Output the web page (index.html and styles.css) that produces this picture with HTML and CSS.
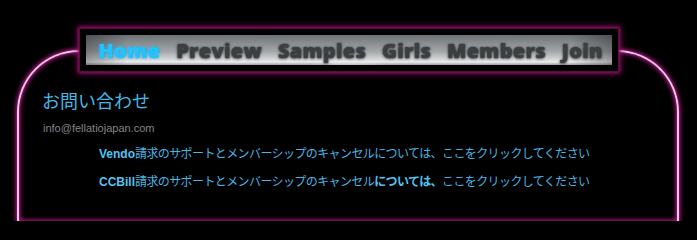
FILE: index.html
```html
<!DOCTYPE html>
<html lang="ja">
<head>
<meta charset="utf-8">
<title>お問い合わせ</title>
<link rel="stylesheet" href="styles.css">
</head>
<body>
<div class="frame">
  <div class="nav-wrap">
    <nav class="nav">
      <div class="nav-bar">
        <a class="nav-item active" href="#">Home</a>
        <a class="nav-item" href="#">Preview</a>
        <a class="nav-item" href="#">Samples</a>
        <a class="nav-item" href="#">Girls</a>
        <a class="nav-item" href="#">Members</a>
        <a class="nav-item" href="#">Join</a>
      </div>
    </nav>
  </div>
  <div class="content">
    <h1 class="title">お問い合わせ</h1>
    <p class="email">info@fellatiojapan.com</p>
    <p class="line"><b class="brand">Vendo</b>請求のサポートとメンバーシップのキャンセルについては、ここをクリックしてください</p>
    <p class="line"><b class="brand">CCBill</b>請求のサポートとメンバーシップのキャンセル<b class="strong">については、</b>ここをクリックしてください</p>
  </div>
</div>
</body>
</html>
```
FILE: styles.css
```css
html, body {
  margin: 0;
  padding: 0;
  background: #000;
  overflow: hidden;
  height: 221px;
}
body {
  width: 697px;
  font-family: "Liberation Sans", "Noto Sans CJK JP", sans-serif;
}
.frame {
  margin: 50px 18px 0 17px;
  height: 169px;
  border: 2px solid #f2c4ee;
  border-bottom: 0;
  border-radius: 62px 62px 0 0;
  box-shadow: 0 0 4px 1px #c81a92, inset 0 0 4px 1px #c81a92;
}
.nav-wrap {
  display: flex;
  justify-content: center;
  margin-top: -23px;
  margin-left: 1px;
}
.nav {
  width: 526px;
  padding: 6px;
  background: #000;
  box-shadow: 0 0 0 1px #5a0a3e, 0 0 3px 2px #8e1262, 0 0 7px 3px rgba(150,20,110,0.55);
}
.nav-bar {
  height: 30px;
  display: flex;
  align-items: center;
  gap: 16px;
  padding-left: 13px;
  box-sizing: border-box;
  background:
    radial-gradient(ellipse 40px 6px at 50% 100%, rgba(255,255,255,0.35), rgba(255,255,255,0) 100%),
    linear-gradient(to right, rgba(0,0,0,0.3), rgba(0,0,0,0) 8%, rgba(0,0,0,0) 92%, rgba(0,0,0,0.3)),
    linear-gradient(to bottom, #6c7174 0%, #868b8e 25%, #a4a8aa 55%, #d2d5d6 80%, #eceeee 90%, #9a9ea0 100%);
}
.nav-item {
  font-family: "Open Sans", "DejaVu Sans", sans-serif;
  font-weight: 800;
  font-size: 20px;
  line-height: 30px;
  color: #3c3f42;
  text-decoration: none;
  text-shadow: 0 0 2px #2a2c2e, 0 1px 3px rgba(0,0,0,0.5);
  letter-spacing: 0.3px;
  padding-top: 1px;
}
.nav-item.active {
  color: #22c4ff;
  text-shadow: 0 0 2px #1aa8e8, 0 0 3px rgba(30,180,255,0.6);
}
.content {
  padding-left: 23px;
}
.title {
  margin: 17px 0 0 0;
  font-family: "Noto Sans CJK JP", "Liberation Sans", sans-serif;
  font-weight: 400;
  font-size: 18px;
  line-height: 24px;
  color: #45b8e6;
}
.email {
  margin: 9px 0 0 1px;
  font-size: 11px;
  line-height: 14px;
  color: #858585;
}
.line {
  margin: 11px 0 0 57px;
  font-family: "Liberation Sans", "Noto Sans CJK JP", sans-serif;
  font-size: 12px;
  line-height: 16px;
  color: #4ab4e2;
  letter-spacing: -0.6px;
}
.line + .line {
  margin-top: 12px;
}
.brand {
  color: #52c4f2;
  letter-spacing: 0;
}
.strong {
  color: #52c4f2;
}
```
